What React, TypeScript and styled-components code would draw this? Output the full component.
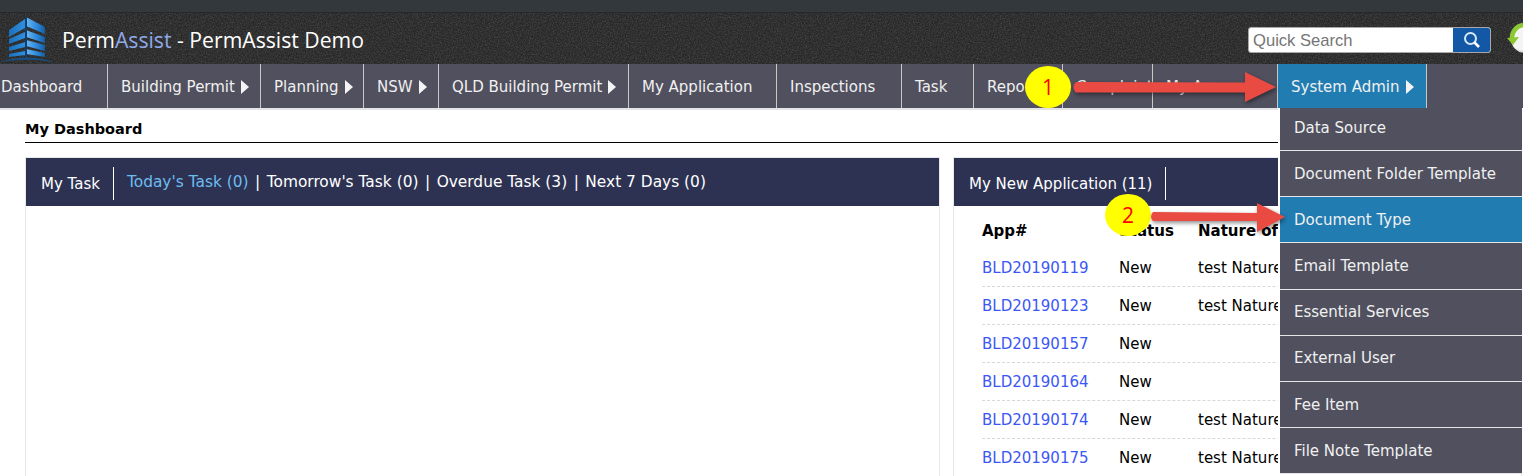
import React from "react";
import styled, { createGlobalStyle } from "styled-components";

const Global = createGlobalStyle`
  html, body { margin: 0; padding: 0; background: #fff; overflow: hidden; }
  body { font-family: "DejaVu Sans", Verdana, sans-serif; font-size: 15px; color: #000; }
`;
const Page = styled.div`position: relative; width: 1523px; height: 476px; overflow: hidden;`;
const TopStrip = styled.div`height: 12px; background: #32383c; border-bottom: 1px solid #26292b;`;
const Header = styled.header`
  position: relative; height: 51px; background: #272727; display: flex; align-items: center; overflow: hidden;
`;
const Texture = styled.svg`position: absolute; inset: 0; width: 100%; height: 100%;`;
const Logo = styled.svg`position: relative; width: 55px; height: 46px; margin-top: 1px; flex: none;`;
const Title = styled.div`
  position: relative; margin-left: 7px; font-family: "Open Sans", sans-serif; font-size: 21.2px; color: #fff; margin-top: 2px; white-space: nowrap;
`;
const Accent = styled.span`color: #8fa9e8;`;
const SearchBox = styled.div`
  position: relative; margin-left: auto; margin-right: 32px; margin-top: 3px; width: 243px; height: 26px; box-sizing: border-box;
  border: 1px solid #a8a8a8; border-radius: 3px; background: #fff; display: flex; overflow: hidden;
`;
const SearchInput = styled.div`
  flex: 1; font-family: "Liberation Sans", Arial, sans-serif; font-size: 16.6px; line-height: 25px; padding-left: 4px; color: #757575;
`;
const SearchBtn = styled.div`width: 37px; background: #1258a6; display: flex; align-items: center; justify-content: center;`;
const Refresh = styled.svg`position: absolute; left: 1505px; top: 8px; width: 30px; height: 34px;`;
const Nav = styled.nav`
  height: 44px; background: #50505f; display: flex; border-bottom: 2px solid #e4e4e8;
`;
const NavItem = styled.div<{ $w: number; $active?: boolean; $first?: boolean }>`
  width: ${(p) => p.$w}px; flex: none; box-sizing: border-box; height: 44px; display: flex; align-items: center;
  padding-left: ${(p) => (p.$first ? 1 : 13)}px; padding-top: 1px; color: #f0f0f0; font-size: 15px; white-space: nowrap;
  border-right: 1px solid #c8c8c8; background: ${(p) => (p.$active ? "#217cb2" : "transparent")};
`;
const Arrow = styled.span`
  display: inline-block; width: 0; height: 0; margin-left: 6px; margin-top: 1px;
  border-left: 8px solid #f4f4f4; border-top: 7px solid transparent; border-bottom: 7px solid transparent;
`;
const Content = styled.main`padding: 11px 0 0 25px;`;
const PageTitle = styled.h1`
  margin: 0; width: 1254px; height: 21px; font-size: 14.5px; line-height: 17px; font-weight: 700; border-bottom: 1px solid #000;
`;
const Columns = styled.div`display: flex; gap: 13px; margin-top: 14px;`;
const Panel = styled.section<{ $w: number }>`
  width: ${(p) => p.$w}px; flex: none; height: 400px; box-sizing: border-box; border: 1px solid #e8e8ec; border-bottom: 0;
`;
const PanelHead = styled.div`
  height: 48px; background: #2d3253; color: #fff; display: flex; align-items: center; padding-left: 15px; white-space: nowrap;
`;
const PanelTitle = styled.div`
  height: 33px; box-sizing: content-box; display: flex; align-items: center; padding-right: 13px; border-right: 1px solid #fff; margin-top: 2px;
  line-height: 19px; & > span { margin-top: 2px; }
`;
const Tabs = styled.div`margin-left: 13px; margin-top: -1px; font-size: 15.4px;`;
const TabLink = styled.span<{ $on?: boolean }>`color: ${(p) => (p.$on ? "#6cbcf0" : "#fff")};`;
const TabSep = styled.span`margin: 0 1.6px;`;
const Table = styled.div`padding: 7px 0 0 28px;`;
const Row = styled.div<{ $head?: boolean }>`
  display: grid; grid-template-columns: 137px 79px 1fr; height: ${(p) => (p.$head ? 36 : 37)}px; align-items: center; white-space: nowrap;
  font-weight: ${(p) => (p.$head ? 700 : 400)}; border-bottom: ${(p) => (p.$head ? "0" : "1px dashed #d8d8d8")};
`;
const AppLink = styled.span`color: #3b57f5;`;
const Menu = styled.div`
  position: absolute; left: 1278px; top: 108px; width: 245px; box-sizing: border-box; background: #50505f; color: #f0f0f0;
  border-left: 2px solid #fff; border-right: 1px solid #fff;
`;
const MenuItem = styled.div<{ $active?: boolean }>`
  height: 46.2px; padding-left: 14px; box-sizing: border-box; display: flex; align-items: center;
  background: ${(p) => (p.$active ? "#217cb2" : "#50505f")}; border-bottom: 1px solid #e6e6ea;
  &:first-child { height: 43px; padding-bottom: 3px; }
`;
const Badge = styled.div<{ $x: number; $y: number }>`
  position: absolute; left: ${(p) => p.$x}px; top: ${(p) => p.$y}px; width: 46px; height: 42px; border-radius: 50%; background: #ffff00; color: #f00;
  font-family: "Open Sans", sans-serif; font-size: 21px; display: flex; align-items: center; justify-content: center;
`;
const Pointer = styled.svg<{ $x: number; $y: number }>`position: absolute; left: ${(p) => p.$x}px; top: ${(p) => p.$y}px; overflow: visible;`;

const nav: [string, number, boolean?][] = [
  ["Dashboard", 108], ["Building Permit", 153, true], ["Planning", 103, true], ["NSW", 75, true], ["QLD Building Permit", 190, true],
  ["My Application", 148], ["Inspections", 125], ["Task", 72], ["Reports", 89], ["Complaint", 90], ["My Account", 125],
];
const menu = ["Data Source", "Document Folder Template", "Document Type", "Email Template", "Essential Services", "External User", "Fee Item", "File Note Template"];
const rows: [string, string][] = [
  ["BLD20190119", "test Nature of Work"], ["BLD20190123", "test Nature of Work"], ["BLD20190157", ""], ["BLD20190164", ""], ["BLD20190174", "test Nature of Work"], ["BLD20190175", "test Nature of Work"],
];

export default function App() {
  return (
    <Page>
      <Global />
      <TopStrip />
      <Header>
        <Texture>
          <filter id="leather"><feTurbulence type="fractalNoise" baseFrequency="0.75" numOctaves="3" /><feColorMatrix values="0 0 0 0 0.5 0 0 0 0 0.5 0 0 0 0 0.5 0.9 0 0 0 -0.3" /></filter>
          <rect width="100%" height="100%" filter="url(#leather)" opacity="0.45" />
        </Texture>
        <Logo viewBox="0 0 55 46">
          <defs>
            <linearGradient id="l" x1="0" x2="1"><stop offset="0" stopColor="#1c6fbb" /><stop offset="1" stopColor="#2f8fe0" /></linearGradient>
            <linearGradient id="r" x1="0" x2="1"><stop offset="0" stopColor="#6ab8f2" /><stop offset=".6" stopColor="#2a86d8" /><stop offset="1" stopColor="#155c9e" /></linearGradient>
          </defs>
          <path d="M9 14 L25 3 L25 12 L9 21Z M9 23 L25 16 L25 22 L9 28Z M9 31 L25 26 L25 31 L9 35Z M9 38 L25 35 L25 39 L9 41Z" fill="url(#l)" />
          <path d="M26 1 L45 11 L45 18 L26 10Z M26 14 L45 21 L45 27 L26 21Z M26 24 L45 29 L45 35 L26 30Z M26 33 L45 37 L45 41 L26 38Z" fill="url(#r)" />
          <path d="M25 1 L27 1 L27 42 L25 42Z" fill="#0d3f70" />
          <path d="M0 46 Q 26 37 54 46 Q 26 41.5 0 46Z" fill="#174f80" />
        </Logo>
        <Title>Perm<Accent>Assist</Accent> - PermAssist Demo</Title>
        <SearchBox>
          <SearchInput>Quick Search</SearchInput>
          <SearchBtn>
            <svg width="18" height="18" viewBox="0 0 18 18" fill="none" stroke="#fff" strokeWidth="2"><circle cx="7.5" cy="7.5" r="5.5" stroke="#d8e8f8" /><path d="M11.5 11.5 L16 16" strokeWidth="2.6" /></svg>
          </SearchBtn>
        </SearchBox>
        <Refresh viewBox="0 0 30 34">
          <defs><radialGradient id="w" cx=".45" cy=".4" r=".7"><stop offset=".7" stopColor="#f4f4f4" /><stop offset="1" stopColor="#9a9a9a" /></radialGradient></defs>
          <circle cx="20" cy="18" r="14" fill="url(#w)" />
          <path d="M7 18 A 13 13 0 0 1 18 4" fill="none" stroke="#8cc832" strokeWidth="4.5" />
          <path d="M2 17 L14 16 L8 24Z" fill="#8cc832" />
        </Refresh>
      </Header>
      <Nav>
        {nav.map(([t, w, a], i) => (
          <NavItem key={t} $w={w} $first={i === 0}>{t}{a && <Arrow />}</NavItem>
        ))}
        <NavItem $w={149} $active>System Admin<Arrow /></NavItem>
      </Nav>
      <Content>
        <PageTitle>My Dashboard</PageTitle>
        <Columns>
          <Panel $w={915}>
            <PanelHead>
              <PanelTitle><span>My Task</span></PanelTitle>
              <Tabs>
                <TabLink $on>Today's Task (0)</TabLink> <TabSep>|</TabSep> <TabLink>Tomorrow's Task (0)</TabLink> <TabSep>|</TabSep> <TabLink>Overdue Task (3)</TabLink> <TabSep>|</TabSep> <TabLink>Next 7 Days (0)</TabLink>
              </Tabs>
            </PanelHead>
          </Panel>
          <Panel $w={569}>
            <PanelHead>
              <PanelTitle><span>My New Application (11)</span></PanelTitle>
            </PanelHead>
            <Table>
              <Row $head><span>App#</span><span>Status</span><span>Nature of Work</span></Row>
              {rows.map(([id, n]) => (
                <Row key={id}><AppLink>{id}</AppLink><span>New</span><span>{n}</span></Row>
              ))}
            </Table>
          </Panel>
        </Columns>
      </Content>
      <Menu>
        {menu.map((m) => <MenuItem key={m} $active={m === "Document Type"}>{m}</MenuItem>)}
      </Menu>
      <Badge $x={1025} $y={66}>1</Badge>
      <Pointer $x={1072} $y={70} width="206" height="34" viewBox="0 0 206 34">
        <path d="M4 12 L173 12.5 L173 2 L204 17 L173 32 L173 22.5 L4 22.5 Q-1 17 4 12Z" fill="#e94b43" style={{ filter: "drop-shadow(1px 2px 2px rgba(0,0,0,.45))" }} />
      </Pointer>
      <Badge $x={1105} $y={194}>2</Badge>
      <Pointer $x={1150} $y={202} width="136" height="32" viewBox="0 0 136 32">
        <path d="M3 10 L107 11 L107 1 L135 15 L107 30 L107 19 L3 19 Q-1 14.5 3 10Z" fill="#e94b43" style={{ filter: "drop-shadow(1px 2px 2px rgba(0,0,0,.45))" }} />
      </Pointer>
    </Page>
  );
}
